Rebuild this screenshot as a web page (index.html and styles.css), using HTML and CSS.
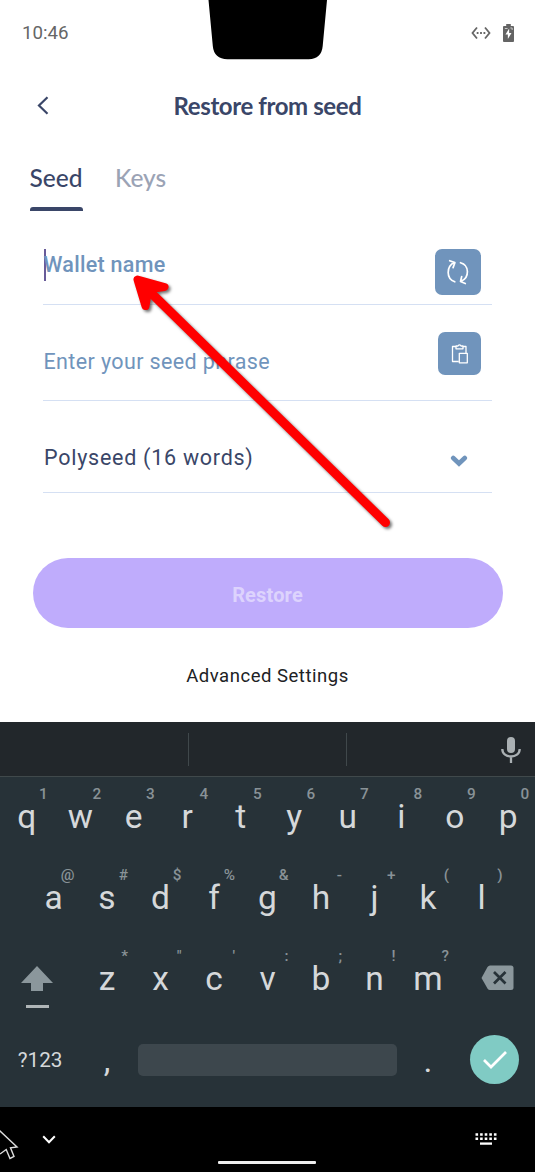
FILE: index.html
```html
<!DOCTYPE html>
<html lang="en">
<head>
<meta charset="utf-8">
<title>Restore from seed</title>
<link rel="stylesheet" href="styles.css">
</head>
<body>
<div class="phone">
  <header class="status">
    <span class="time">10:46</span>
    <svg class="notch" width="121" height="60" viewBox="0 0 121 60"><path d="M.5 0h118.500l-4.300 46q-1.200 13-14 13.300H19.500Q6 59 4.800 46z"/></svg>
    <div class="status-icons">
      <svg width="20" height="14" viewBox="0 0 20 14"><path d="M6 1.500 1.500 7 6 12.500M14 1.500 18.500 7 14 12.500" fill="none" stroke="#666" stroke-width="1.800"/><path d="M5.700 6h1.800v2H5.700zM9.100 6h1.800v2H9.100zM12.500 6h1.800v2h-1.800z" fill="#666"/></svg>
      <svg width="11" height="18" viewBox="0 0 12 18" preserveAspectRatio="none"><path d="M3.500 0h5v2H11q1 0 1 1v14q0 1-1 1H1q-1 0-1-1V3q0-1 1-1h2.500z" fill="#646464"/><path d="M6.700 4.500 2.700 10.500h2.600v4.500l4-6H6.700z" fill="#fff"/><path d="M2 4.500h3M8 4h2v2" stroke="#ccc" fill="none"/></svg>
    </div>
  </header>
  <div class="titlebar">
    <svg class="back" width="12" height="19" viewBox="0 0 12 19"><path d="M10.500 1.300 2 9.500l8.500 8.200" fill="none" stroke="#3a4668" stroke-width="2.200"/></svg>
    <h1>Restore from seed</h1>
  </div>
  <nav class="tabs"><span class="tab active">Seed<i class="underline"></i></span><span class="tab">Keys</span></nav>
  <main class="form">
    <div class="field wallet">
      <span class="caret"></span><span class="label">Wallet name</span>
      <span class="tool big"><svg width="24" height="26" viewBox="0 0 24 26" fill="none" stroke="#fff" stroke-width="1.700" stroke-linecap="round" stroke-linejoin="round"><path d="M8.800 22.800C-.1 19.800.2 7.500 8.300 3.600M3.700 1.700l5.200 1.900-1.800 5M14.500 3.700c9 2.500 9.200 15 .6 18.600M15.700 17.500l-1.200 5 4.800 2"/></svg></span>
    </div>
    <div class="field seed">
      <span class="label">Enter your seed phrase</span>
      <span class="tool"><svg width="18" height="20" viewBox="0 0 18 20" fill="none" stroke="#fff" stroke-width="1.300" stroke-linejoin="round"><path d="M7.500 17.500h-6v-15H5m7 0h3V9M5 2v2.800h7V2h-2Q8.500-.2 7 2zM8.300 9.300h8v9.500h-8z"/></svg></span>
    </div>
    <div class="field type">
      <span class="label">Polyseed (16 words)</span>
      <svg class="down" width="18" height="14" viewBox="0 0 18 14"><path d="m3.200 4 5.800 5.500L14.800 4" fill="none" stroke="#7094bc" stroke-width="4.600" stroke-linecap="round"/></svg>
    </div>
    <button class="restore">Restore</button>
    <div class="advanced">Advanced Settings</div>
  </main>
  <section class="keyboard">
    <div class="suggest">
      <i class="divider first"></i><i class="divider"></i>
      <svg class="mic" width="20" height="28" viewBox="0 0 20 28"><rect x="6" y="1" width="8" height="16" rx="4" fill="#aab0b3"/><path d="M1.300 13c0 10 17.400 10 17.400 0M10 21v6" fill="none" stroke="#aab0b3" stroke-width="2.300"/></svg>
    </div>
    <div class="row">
      <div class="key">q<sup>1</sup></div><div class="key">w<sup>2</sup></div><div class="key">e<sup>3</sup></div><div class="key">r<sup>4</sup></div><div class="key">t<sup>5</sup></div><div class="key">y<sup>6</sup></div><div class="key">u<sup>7</sup></div><div class="key">i<sup>8</sup></div><div class="key">o<sup>9</sup></div><div class="key">p<sup>0</sup></div>
    </div>
    <div class="row">
      <div class="key">a<sup>@</sup></div><div class="key">s<sup>#</sup></div><div class="key">d<sup>$</sup></div><div class="key">f<sup>%</sup></div><div class="key">g<sup>&amp;</sup></div><div class="key">h<sup>-</sup></div><div class="key">j<sup>+</sup></div><div class="key">k<sup>(</sup></div><div class="key">l<sup>)</sup></div>
    </div>
    <div class="row">
      <div class="side"><svg width="34" height="44" viewBox="0 0 34 44"><path d="M17 1 33 18H23v8H11v-8H1z" fill="#8b979c"/><path d="M6 40h23v3H6z" fill="#afb5b7"/></svg></div>
      <div class="key">z<sup>*</sup></div><div class="key">x<sup>"</sup></div><div class="key">c<sup>'</sup></div><div class="key">v<sup>:</sup></div><div class="key">b<sup>;</sup></div><div class="key">n<sup>!</sup></div><div class="key">m<sup>?</sup></div>
      <div class="side del"><svg width="33" height="26" viewBox="0 0 33 26"><path d="M9 .5h21q2.500 0 2.500 2.500v19.500q0 2.500-2.500 2.500H9q-1.500 0-2.500-1.500L.5 13 6.500 2Q7.500.5 9 .5z" fill="#8b979c"/><path d="m13 7 11.500 11.500M24.500 7 13 18.500" stroke="#273238" stroke-width="2.700"/></svg></div>
    </div>
    <div class="row last">
      <div class="symbols">?123</div><div class="key">,</div><div class="space"></div><div class="key dot">.</div>
      <div class="enter"><svg width="24" height="20" viewBox="0 0 24 20"><path d="m1 10 7 7L23 2" fill="none" stroke="#fff" stroke-width="2.700"/></svg></div>
    </div>
  </section>
  <footer class="nav">
    <svg class="hide" width="14" height="9" viewBox="0 0 14 9"><path d="m1.200 1.300 5.800 6 5.800-6" fill="none" stroke="#fff" stroke-width="2"/></svg>
    <span class="home"></span>
    <svg class="switch" width="22" height="12" viewBox="0 0 22 12" stroke="#fff"><path d="M.5 1.500h21M.5 5.800h21" stroke-width="2.400" stroke-dasharray="2.600 2"/><path d="M5 10.600h12" stroke-width="2.300"/></svg>
    <svg class="pointer" width="20" height="32" viewBox="0 0 20 32"><path d="M-1 1 17 18 10.500 18.800 14 27.500 10 29.500 6.200 20.500 0 25" fill="#000" stroke="#ddd" stroke-width="1.400"/></svg>
  </footer>
  <svg class="arrow" width="270" height="265" viewBox="130 270 270 265"><path d="m137.500 279.500 27 7.500-11 1.500-6 5.500-2 12z" fill="red" stroke="red" stroke-width="8" stroke-linejoin="round"/><path d="m142 284 243.500 238.500" stroke="red" stroke-width="9" stroke-linecap="round"/></svg>
</div>
</body>
</html>
```
FILE: styles.css
```css
* { box-sizing: border-box; }
body { margin: 0; background: #fff; font-family: Roboto, "Liberation Sans", sans-serif; }
.phone { position: relative; width: 535px; height: 1172px; overflow: hidden; display: flex; flex-direction: column; }
.status { height: 66px; display: flex; justify-content: space-between; align-items: flex-start; padding: 0 21px 0 22px; }
.time { width: 186px; font-size: 18.700px; line-height: 67px; color: #666; }
.notch { flex: none; }
.status-icons { width: 186px; display: flex; justify-content: flex-end; align-items: center; gap: 12px; height: 65px; }
.titlebar { height: 80px; display: flex; align-items: center; padding-left: 37px; }
.back { margin-bottom: 2px; }
h1 { flex: 1; margin: 0 49px 0 0; text-align: center; font: 700 24px/80px Lato, sans-serif; letter-spacing: -.4px; color: #3a4668; }
.tabs { height: 65px; display: flex; gap: 33px; padding: 14px 0 0 29.500px; align-items: flex-start; }
.tab { font: 500 24.500px/36px Lato, sans-serif; color: #9ba3b5; height: 51px; }
.active { color: #3a4668; width: 52.500px; }
.underline { display: block; height: 4.500px; width: 53px; margin-top: 10.500px; background: #3a4668; border-radius: 3px 3px 0 0; }
.form { height: 511px; padding: 19px 43px 0; display: flex; flex-direction: column; }
.field { display: flex; align-items: center; border-bottom: 1px solid #d5e0f3; font-size: 21.500px; letter-spacing: .5px; color: #7094bc; }
.label { flex: 1; white-space: nowrap; }
.wallet { height: 75px; font-weight: 500; padding: 0 11px 0 0; letter-spacing: .28px; }
.wallet .label { padding-bottom: 5px; }
.caret { width: 2.500px; height: 32px; margin: 0 -2.500px 5px .5px; background: #685b99; }
.seed { height: 96px; padding: 0 11px 0 .5px; letter-spacing: .38px; }
.seed .label { padding-top: 18px; }
.seed .tool { margin-top: 2px; }
.type { height: 92px; padding: 0 24px 0 1px; color: #3a4668; letter-spacing: .74px; }
.type .label { padding-top: 22px; }
.down { margin-top: 29px; }
.tool { width: 43px; height: 43px; border-radius: 7px; background: #7094bc; display: flex; align-items: center; justify-content: center; }
.big { width: 46px; height: 46px; margin-top: 9px; }
.restore { flex: none; height: 70px; margin: 65px -10.500px 0; border: 0; border-radius: 35px; background: #bfacfc; color: #ddd3fd; font: 700 20px/70px Roboto, sans-serif; letter-spacing: .15px; padding: 2px 0 0; }
.advanced { margin-top: 36px; text-align: center; font-size: 18.500px; line-height: 24px; letter-spacing: .52px; color: #202124; }
.keyboard { height: 385px; background: #273238; color: #d5d8da; }
.suggest { height: 55px; background: #22272b; border-bottom: 1px solid #40494b; display: flex; align-items: center; }
.divider { width: 1px; height: 33px; background: #40484b; margin-left: 157px; }
.first { margin-left: 188px; }
.mic { margin-left: 154px; margin-top: 1px; }
.row { height: 81px; display: flex; justify-content: center; }
.key { position: relative; width: 53.500px; text-align: center; font-size: 33.500px; line-height: 80px; }
.key sup { position: absolute; right: 5.700px; top: 0; font-size: 15.300px; line-height: 35px; font-weight: 500; color: #899297; }
.side { width: 80.250px; padding: 26px 0 0 20px; }
.del { padding-left: 26px; }
.last { height: 87px; justify-content: flex-start; }
.symbols { width: 80.250px; text-align: center; font-size: 20.700px; line-height: 81px; }
.last .key { line-height: 82px; }
.last .dot { padding-left: 1px; }
.space { width: 259px; height: 32px; margin: 24px 4px 0; border-radius: 5px; background: #3d474d; }
.enter { width: 49px; height: 49px; border-radius: 50%; margin: 15px 0 0 16px; background: #80cbc4; display: flex; align-items: center; justify-content: center; }
.nav { position: relative; height: 65px; background: #000; display: flex; justify-content: space-between; padding: 0 38px 0 42px; }
.hide { margin-top: 28px; }
.home { width: 98px; height: 3px; background: #eee; border-radius: 1px; margin: 54px 0 0 3px; }
.switch { margin-top: 26px; }
.pointer { position: absolute; left: 0; top: 22px; }
.arrow { position: absolute; left: 130px; top: 270px; filter: drop-shadow(2px 2px 1.500px rgba(0,0,0,.55)); }
```
